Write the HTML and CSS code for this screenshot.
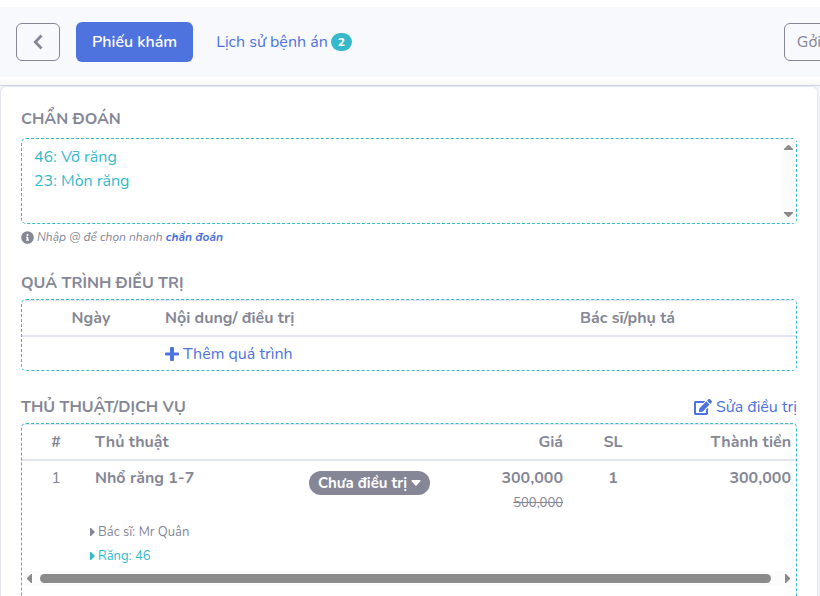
FILE: index.html
```html
<!DOCTYPE html>
<html lang="vi">
<head>
<meta charset="utf-8">
<meta name="viewport" content="width=device-width, initial-scale=1">
<title>Phiếu khám</title>
<link rel="stylesheet" href="styles.css">
</head>
<body>
<header class="topbar">
  <nav class="toolbar">
    <button class="btn-outline btn-back" type="button" aria-label="Back">
      <svg width="10" height="16" viewBox="0 0 10 16"><path d="M8.500 1.500 2.300 8l6.200 6.500" fill="none" stroke="currentColor" stroke-width="2.800"/></svg>
    </button>
    <a class="tab tab-active" href="#">Phiếu khám</a>
    <a class="tab" href="#">Lịch sử bệnh án <span class="badge">2</span></a>
    <button class="btn-outline btn-send" type="button">Gởi</button>
  </nav>
</header>
<main class="content">
  <div class="card">
    <section class="section">
      <label class="heading heading-field" for="diagnosis">CHẨN ĐOÁN</label>
      <div class="field">
        <textarea id="diagnosis" class="box diagnosis" rows="3">46: Vỡ răng
23: Mòn răng</textarea>
        <div class="vscroll" aria-hidden="true">
          <svg width="9" height="5" viewBox="0 0 9 5"><path d="M4 0h1l4 4v1H0V4z" fill="currentColor"/></svg>
          <svg width="9" height="5" viewBox="0 0 9 5"><path d="M0 0h9v1L5 5H4L0 1z" fill="currentColor"/></svg>
        </div>
      </div>
      <p class="help">
        <svg class="info" width="13" height="13" viewBox="0 0 512 512"><path fill="currentColor" d="M256 8a248 248 0 1 0 0 496 248 248 0 0 0 0-496zm0 110a42 42 0 1 1 0 84 42 42 0 0 1 0-84zm56 254c0 7-5 12-12 12h-88c-7 0-12-5-12-12v-24c0-7 5-12 12-12h12v-64h-12c-7 0-12-5-12-12v-24c0-7 5-12 12-12h64c7 0 12 5 12 12v100h12c7 0 12 5 12 12z"/></svg>
        <span>Nhập @ để chọn nhanh <a href="#">chẩn đoán</a></span>
      </p>
    </section>

    <section class="section">
      <h2 class="heading">QUÁ TRÌNH ĐIỀU TRỊ</h2>
      <div class="box">
        <table class="progress">
          <thead>
            <tr><th class="col-date center">Ngày</th><th>Nội dung/ điều trị</th><th class="col-doctor">Bác sĩ/phụ tá</th></tr>
          </thead>
          <tbody>
            <tr>
              <td></td>
              <td><a class="icon-link" href="#"><svg width="14" height="14" viewBox="0 0 14 14"><path d="M6 0h2q1 0 1 1v4.500h4q1 0 1 1v1q0 1-1 1H9V13q0 1-1 1H6q-1 0-1-1V8.500H1q-1 0-1-1v-1q0-1 1-1h4V1q0-1 1-1z" fill="currentColor"/></svg>Thêm quá trình</a></td>
              <td></td>
            </tr>
          </tbody>
        </table>
      </div>
    </section>

    <section class="section section-fill">
      <div class="heading-row">
        <h2 class="heading">THỦ THUẬT/DỊCH VỤ</h2>
        <a class="icon-link" href="#"><svg width="18" height="16" viewBox="0 0 576 512"><path fill="currentColor" d="M402.600 83.200l90.200 90.200c3.800 3.800 3.800 10 0 13.800L274.400 405.600l-92.800 10.300c-12.400 1.400-22.900-9.100-21.500-21.500l10.300-92.800L388.800 83.200c3.800-3.800 10-3.800 13.800 0zm162-22.900l-48.800-48.800c-15.200-15.200-39.900-15.200-55.200 0l-35.400 35.400c-3.800 3.800-3.800 10 0 13.800l90.200 90.200c3.800 3.800 10 3.800 13.800 0l35.400-35.400c15.200-15.300 15.200-40 0-55.200zM384 346.200V448H64V128h229.800c3.200 0 6.200-1.300 8.500-3.500l40-40c7.600-7.600 2.200-20.500-8.500-20.500H48C21.500 64 0 85.500 0 112v352c0 26.500 21.500 48 48 48h352c26.500 0 48-21.500 48-48V306.200c0-10.700-12.900-16-20.500-8.500l-40 40c-2.200 2.300-3.500 5.300-3.500 8.500z"/></svg>Sửa điều trị</a>
      </div>
      <div class="box box-fill">
        <table class="services">
          <colgroup><col class="col-num"><col><col class="col-price"><col class="col-qty"><col class="col-total"></colgroup>
          <thead>
            <tr><th class="center">#</th><th>Thủ thuật</th><th class="right">Giá</th><th class="center">SL</th><th class="right">Thành tiền</th></tr>
          </thead>
          <tbody>
            <tr>
              <td class="center">1</td>
              <td>
                <div class="service">
                  <strong>Nhổ răng 1-7</strong>
                  <button class="status" type="button">Chưa điều trị<svg width="10" height="6" viewBox="0 0 10 6"><path d="M1 0h8q1 0 .500 1L5.600 5.600q-.600.500-1.200 0L.500 1Q0 0 1 0z" fill="currentColor"/></svg></button>
                </div>
              </td>
              <td class="right"><strong>300,000</strong><del>500,000</del></td>
              <td class="center"><strong>1</strong></td>
              <td class="right"><strong>300,000</strong></td>
            </tr>
            <tr>
              <td></td>
              <td class="details" colspan="4">
                <ul>
                  <li><svg width="5" height="8" viewBox="0 0 5 8"><path d="M0 0h1l4 4-4 4H0z" fill="currentColor"/></svg>Bác sĩ: Mr Quân</li>
                  <li class="teal"><svg width="5" height="8" viewBox="0 0 5 8"><path d="M0 0h1l4 4-4 4H0z" fill="currentColor"/></svg>Răng: 46</li>
                </ul>
              </td>
            </tr>
          </tbody>
        </table>
        <div class="hscroll" aria-hidden="true">
          <svg width="5" height="9" viewBox="0 0 5 9"><path d="M5 0v9H4L0 5V4l4-4z" fill="currentColor"/></svg>
          <span class="thumb"></span>
          <svg width="5" height="9" viewBox="0 0 5 9"><path d="M0 0h1l4 4v1L1 9H0z" fill="currentColor"/></svg>
        </div>
      </div>
    </section>
  </div>
</main>
</body>
</html>
```
FILE: styles.css
```css
* { box-sizing: border-box; }

body {
  margin: 0;
  height: 100vh;
  overflow: hidden;
  display: flex;
  flex-direction: column;
  background: #f3f4f8;
  color: #858796;
  font: 400 16px/24px Nunito, Roboto, "Noto Sans", sans-serif;
}

a { color: #4e73df; text-decoration: none; }
button { font: inherit; cursor: pointer; }
svg { flex: none; }
strong { font-weight: 700; }

.topbar {
  padding: 7px 0 8px;
  background: linear-gradient(#fff 77px, #f7f7f8 85px);
  border-bottom: 1px solid #d1d5e2;
}

.toolbar {
  display: flex;
  align-items: center;
  height: 70px;
  padding: 0 0 0 16px;
  background: #f8f9fc;
  overflow: hidden;
}

.btn-outline {
  height: 38px;
  padding: 0 12px;
  border: 1px solid #858796;
  border-radius: 6px;
  background: transparent;
  color: #858796;
}

.btn-back {
  display: flex;
  align-items: center;
  justify-content: center;
  width: 44px;
  margin-right: 16px;
}

.btn-send { flex: none; margin: 0 -14px 0 auto; }

.tab {
  display: flex;
  align-items: center;
  gap: 3px;
  margin-right: 7px;
  padding: 8px 16px;
  border-radius: 6px;
  white-space: nowrap;
}

.tab-active { background: #4e73df; color: #fff; font-weight: 600; }

.badge {
  padding: 0 7px;
  border-radius: 10px;
  background: #36b9cc;
  color: #fff;
  font-size: 12px;
  font-weight: 800;
  line-height: 18px;
}

.content {
  flex: 1;
  min-height: 0;
  display: flex;
  padding-right: 2px;
}

.card {
  flex: 1;
  min-width: 0;
  display: flex;
  flex-direction: column;
  padding: 20px 20px 0;
  border: 1px solid #e3e6f0;
  border-bottom: 0;
  border-radius: 6px 6px 0 0;
  background: #fff;
}

.section { margin-bottom: 24px; }

.section-fill {
  flex: 1;
  min-height: 0;
  margin: 0;
  display: flex;
  flex-direction: column;
}

.heading {
  display: block;
  margin: 0 0 4px;
  font-size: 16px;
  font-weight: 700;
  line-height: 24px;
}

.heading-field { margin-bottom: 7px; }

.heading-row { display: flex; align-items: flex-start; justify-content: space-between; }

.box {
  border: 1px dashed #36b9cc;
  border-radius: 5px;
  overflow: hidden;
}

.box-fill {
  flex: 1;
  min-height: 0;
  border-bottom: 0;
  border-radius: 5px 5px 0 0;
}

.field { position: relative; }

.diagnosis {
  display: block;
  width: 100%;
  height: 86px;
  padding: 6px 28px 6px 12px;
  background: #fff;
  color: #36b9cc;
  font: inherit;
  resize: none;
}

.vscroll {
  position: absolute;
  top: 1px;
  right: 1px;
  bottom: 1px;
  width: 15px;
  display: flex;
  flex-direction: column;
  align-items: center;
  justify-content: space-between;
  padding: 6px 0;
  background: #fcfcfc;
  color: #8b8b8b;
}

.help {
  display: flex;
  align-items: center;
  gap: 3px;
  margin: 3px 0 0;
  font-size: 12px;
  font-style: italic;
  line-height: 20px;
}

.help a { font-weight: 700; }

table { width: 100%; border-collapse: collapse; table-layout: fixed; }
th, td { padding: 5px 5px 4px; text-align: left; vertical-align: top; }
th { padding-bottom: 5px; font-weight: 700; }
thead { border-top: 1px solid #e3e6f0; border-bottom: 2px solid #e3e6f0; }
.center { text-align: center; }
.right { text-align: right; }

.col-date { width: 138px; }
.col-doctor { width: 221px; }
.col-num { width: 68px; }
.col-price { width: 133px; }
.col-qty { width: 90px; }
.col-total { width: 138px; }

.icon-link {
  display: inline-flex;
  align-items: center;
  gap: 4px;
  vertical-align: top;
}

.service { display: flex; justify-content: space-between; align-items: flex-start; }

.status {
  display: flex;
  align-items: center;
  gap: 4px;
  height: 24px;
  margin: 5px 0 0;
  padding: 0 9px;
  border: 0;
  border-radius: 12px;
  background: #858796;
  color: #fff;
  font-size: 15px;
  font-weight: 700;
}

del { display: block; margin: 1px 0; font-size: 13px; }

.details { padding: 0; }
.details ul { margin: 0; padding: 0; list-style: none; font-size: 13px; }
.details li { display: flex; align-items: center; gap: 3px; }
.teal { color: #36b9cc; }

.hscroll {
  display: flex;
  align-items: center;
  gap: 8px;
  height: 15px;
  margin-top: 3px;
  padding: 0 6px 0 5px;
  background: #fcfcfc;
  color: #8b8b8b;
}

.thumb { flex: 1; height: 9px; margin-right: 6px; border-radius: 5px; background: #8b8b8b; }
```
